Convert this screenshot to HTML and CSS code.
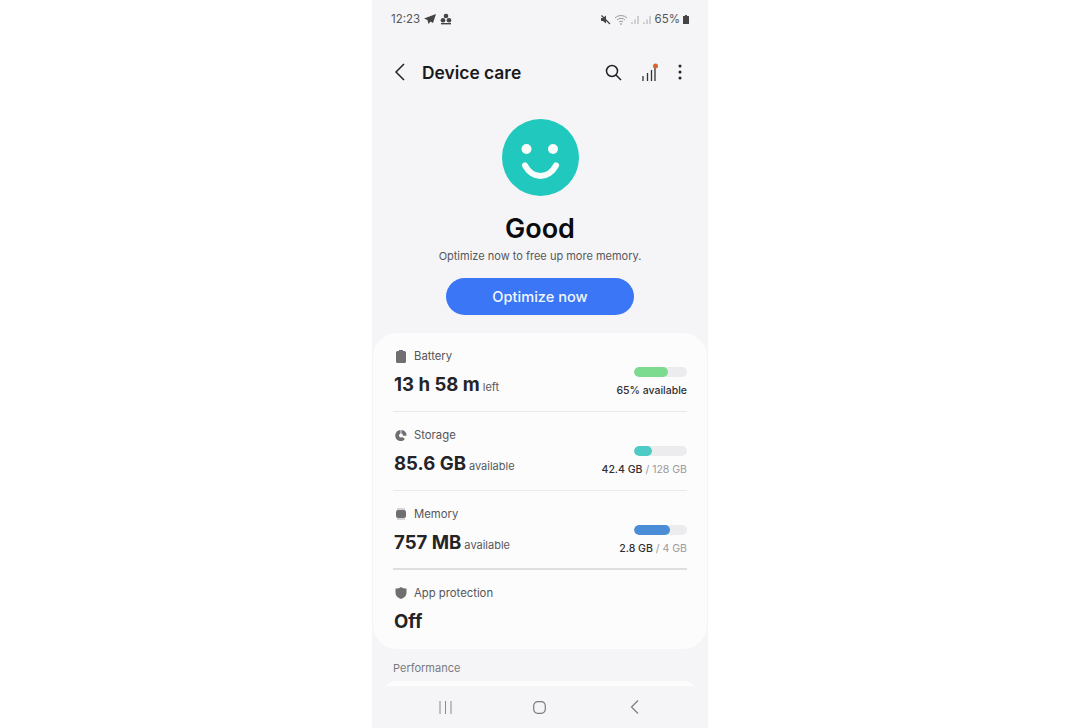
FILE: index.html
```html
<!DOCTYPE html>
<html lang="en">
<head>
<meta charset="utf-8">
<title>Device care</title>
<link rel="stylesheet" href="styles.css">
</head>
<body>
<div class="phone">
  <div class="content">
    <div class="status">
      <div class="status-group">
        <span>12:23</span>
        <svg class="st-icon" width="14" height="12" viewBox="0 0 14 12"><path d="M13 1 1 5.600l3.400 1.300L5.600 11l2-2.600 2.400 1.600z" fill="#444"/></svg>
        <svg class="st-icon" width="12" height="12" viewBox="0 0 12 12"><g fill="#444"><circle cx="6" cy="3" r="2.300"/><circle cx="3" cy="7.200" r="2.300"/><circle cx="9" cy="7.200" r="2.300"/><rect x="1" y="10" width="10" height="1.400"/></g></svg>
      </div>
      <div class="status-group right">
        <svg width="11" height="11" viewBox="0 0 11 11"><path d="M1 4h2l3-2.500v8L3 7H1z" fill="#444"/><path d="M1.500 1.500l8.500 8.500" stroke="#444" stroke-width="1.300"/></svg>
        <svg class="wifi" width="14" height="11" viewBox="0 0 14 11" fill="none" stroke="#999" stroke-width="1"><path d="M1 4a8.500 8.500 0 0 1 12 0M3 6a5.600 5.600 0 0 1 8 0M5 8a2.800 2.800 0 0 1 4 0"/><circle cx="7" cy="10" r=".5"/></svg>
        <svg class="sig" width="9" height="9" viewBox="0 0 9 9"><path d="M1 7v2M4 4.500V9M7 1v8" stroke="#aaa" stroke-width="1"/></svg>
        <svg class="sig" width="9" height="9" viewBox="0 0 9 9"><path d="M1 7v2M4 4.500V9M7 1v8" stroke="#aaa" stroke-width="1"/></svg>
        <span class="pct">65%</span>
        <svg width="6" height="9" viewBox="0 0 6 9"><path d="M2 0h2v1h1.500a.5.500 0 0 1 .5.500V9H0V1.500A.5.500 0 0 1 .5 1H2z" fill="#444"/></svg>
      </div>
    </div>

    <header class="appbar">
      <svg class="back" width="12" height="18" viewBox="0 0 12 18" fill="none" stroke="#222" stroke-width="1.500"><path d="M10 1 2 9l8 8"/></svg>
      <h1 class="title">Device care</h1>
      <div class="actions">
        <svg width="17" height="17" viewBox="0 0 17 17" fill="none" stroke="#222" stroke-width="1.500"><circle cx="7" cy="7" r="5.500"/><path d="m11 11 5 5"/></svg>
        <svg width="16" height="18" viewBox="0 0 16 18" fill="none" stroke="#333" stroke-width="1.300"><path d="M1 13v5M5.500 10v8M9.500 7v11M13 5v13"/><circle cx="13.500" cy="3" r="2.500" fill="#d2692f" stroke="none"/></svg>
        <svg width="4" height="16" viewBox="0 0 4 16" fill="#222"><circle cx="2" cy="2" r="1.500"/><circle cx="2" cy="8" r="1.500"/><circle cx="2" cy="14" r="1.500"/></svg>
      </div>
    </header>

    <section class="hero">
      <svg class="smile" width="77" height="77" viewBox="0 0 77 77"><circle cx="38.500" cy="38.500" r="38.500" fill="#20c8bd"/><circle cx="24.500" cy="30" r="5" fill="#f8fcfb"/><circle cx="51" cy="30" r="5" fill="#f8fcfb"/><path d="M23 46.500c3.500 6.500 9.500 10.500 15.500 10.500s12-4 15.500-10.500" fill="none" stroke="#f8fcfb" stroke-width="6" stroke-linecap="round"/></svg>
      <div class="good">Good</div>
      <p class="hint">Optimize now to free up more memory.</p>
      <button class="cta">Optimize now</button>
    </section>

    <section class="card">
      <div class="row">
        <div class="row-main">
          <div class="label"><svg width="10" height="13" viewBox="0 0 10 13"><path d="M3 0h4v1h1.500A1.500 1.500 0 0 1 10 2.500V11.500A1.500 1.500 0 0 1 8.500 13h-7A1.500 1.500 0 0 1 0 11.500V2.500A1.500 1.500 0 0 1 1.500 1H3z" fill="#6f6f72"/></svg><span>Battery</span></div>
          <div class="value"><b>13 h 58 m</b><small>left</small></div>
        </div>
        <div class="row-side">
          <div class="bar"><div class="fill fill-green"></div></div>
          <div class="meta"><b>65% available</b></div>
        </div>
      </div>
      <div class="row">
        <div class="row-main">
          <div class="label"><svg width="13" height="13" viewBox="0 0 13 13"><path d="M6 .5v6.300l4.800 3.600A6 6 0 1 1 6 .5z" fill="#6f6f72"/><path d="M7 .5a6 6 0 0 1 5.500 6.200l-5.500 0z" fill="#6f6f72"/><circle cx="6.500" cy="6.500" r="2.200" fill="#fcfcfd"/></svg><span>Storage</span></div>
          <div class="value"><b>85.6 GB</b><small>available</small></div>
        </div>
        <div class="row-side">
          <div class="bar"><div class="fill fill-teal"></div></div>
          <div class="meta"><b>42.4 GB</b> / 128 GB</div>
        </div>
      </div>
      <div class="row row-strong">
        <div class="row-main">
          <div class="label"><svg width="12" height="12" viewBox="0 0 12 12"><rect x="1" y="2" width="10" height="8" rx="2" fill="#6f6f72"/><path d="M3 0v2M5 0v2M7 0v2M9 0v2M3 10v2M5 10v2M7 10v2M9 10v2" stroke="#9a9a9d" stroke-width=".8"/></svg><span>Memory</span></div>
          <div class="value"><b>757 MB</b><small>available</small></div>
        </div>
        <div class="row-side">
          <div class="bar"><div class="fill fill-blue"></div></div>
          <div class="meta"><b>2.8 GB</b> / 4 GB</div>
        </div>
      </div>
      <div class="row row-last">
        <div class="row-main">
          <div class="label"><svg width="11" height="12" viewBox="0 0 11 12"><path d="M5.500 0C7 1 9 1.500 11 1.500V6c0 3-2.500 5-5.500 6C2.500 11 0 9 0 6V1.500C2 1.500 4 1 5.500 0z" fill="#6f6f72"/></svg><span>App protection</span></div>
          <div class="value"><b>Off</b></div>
        </div>
      </div>
    </section>

    <h2 class="section-title">Performance</h2>
    <div class="next-card"></div>
  </div>

  <nav class="navbar">
    <svg width="13" height="13" viewBox="0 0 13 13" stroke="#8a8a8c" stroke-width="1"><path d="M1 0v13M6.500 0v13M12 0v13"/></svg>
    <svg width="13" height="13" viewBox="0 0 13 13" fill="none" stroke="#7c7c7e" stroke-width="1.200"><rect x=".7" y=".7" width="11.600" height="11.600" rx="4"/></svg>
    <svg width="9" height="14" viewBox="0 0 9 14" fill="none" stroke="#7c7c7e" stroke-width="1.200"><path d="M8 .5 1.500 7 8 13.500"/></svg>
  </nav>
</div>
</body>
</html>
```

FILE: styles.css
```css
* { box-sizing: border-box; }
html, body { margin: 0; height: 100%; background: #fff; }
body {
  display: flex;
  justify-content: center;
  font-family: Inter, "Noto Sans", "Liberation Sans", sans-serif;
  overflow: hidden;
}
.phone {
  width: 336px;
  height: 728px;
  background: #f5f5f8;
  display: flex;
  flex-direction: column;
  overflow: hidden;
}
.content { flex: 1; min-height: 0; overflow: hidden; }

.status {
  height: 38px;
  padding: 0 19px;
  display: flex;
  justify-content: space-between;
  align-items: center;
  font-size: 11.500px;
  color: #555;
}
.status-group { display: flex; align-items: center; gap: 3px; }
.status-group.right { gap: 3px; }
.st-icon { display: block; }
.pct { color: #555; }

.appbar {
  height: 34px;
  margin-top: 17px;
  padding: 0 26px 0 22px;
  display: flex;
  align-items: center;
}
.back { margin-right: 16px; }
.title { margin: 0; font-size: 17.400px; font-weight: 600; color: #1a1a1c; }
.actions { margin-left: auto; display: flex; align-items: center; gap: 20px; }

.hero {
  margin-top: 30px;
  display: flex;
  flex-direction: column;
  align-items: center;
}
.smile { display: block; }
.good { margin-top: 16px; font-size: 27px; line-height: 34px; font-weight: 600; color: #0b0b0d; }
.hint { margin: 2px 0 0; font-size: 11px; line-height: 16px; color: #57575a; }
.cta {
  margin-top: 14px;
  width: 188px;
  height: 37px;
  border: 0;
  border-radius: 19px;
  background: #3b76f6;
  color: #f2f6ff;
  font: 500 14.600px Inter, "Liberation Sans", sans-serif;
}

.card {
  margin: 18px 1px 0;
  height: 316px;
  padding: 0 20px;
  background: #fcfcfd;
  border-radius: 24px;
}
.row {
  height: 79px;
  padding-top: 14px;
  display: flex;
  justify-content: space-between;
  border-bottom: 1px solid #e9e9ec;
}
.row-strong { border-bottom: 2px solid #dfdfe2; }
.row-last { border-bottom: 0; }
.label { display: flex; align-items: center; gap: 8px; height: 18px; font-size: 11.300px; color: #555558; }
.label svg { width: 12px; flex: none; margin-left: 2px; margin-right: -1px; }
.value { margin: 7px 0 0 1px; display: flex; align-items: baseline; gap: 3px; color: #242426; line-height: 24px; }
.value b { font-size: 18.600px; font-weight: 700; }
.value small { font-size: 11px; color: #58585b; }
.row-side { width: 120px; padding-top: 20px; display: flex; flex-direction: column; align-items: flex-end; }
.bar { width: 53px; height: 10px; border-radius: 5px; background: #ececee; overflow: hidden; }
.fill { height: 100%; border-radius: 5px; }
.fill-green { width: 34px; background: #7cdb8e; }
.fill-teal { width: 18px; background: #4fcbc6; }
.fill-blue { width: 36px; background: #4a8cd6; }
.meta { margin-top: 7px; font-size: 10.500px; line-height: 14px; color: #9a9a9d; white-space: nowrap; }
.meta b { font-weight: 500; color: #2f2f32; }

.section-title { margin: 12px 0 0 21px; font-size: 11px; line-height: 14px; font-weight: 400; color: #7a7a7d; }
.next-card { margin: 6px 9px 0; height: 40px; background: #fcfcfd; border-radius: 16px; }

.navbar {
  flex: none;
  height: 42px;
  padding: 0 26px;
  background: #f5f5f8;
  display: grid;
  grid-template-columns: repeat(3, 1fr);
  justify-items: center;
  align-items: center;
}
```
